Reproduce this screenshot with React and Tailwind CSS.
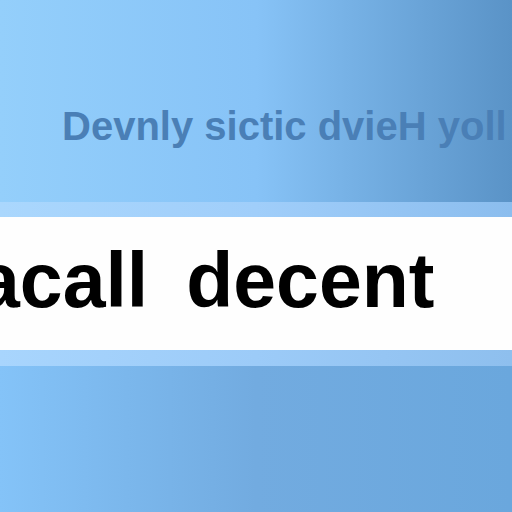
import React from 'react';

const font = { fontFamily: '"Liberation Sans", Arial, sans-serif' };

export default function App() {
  return (
    <div className="flex h-[512px] w-[512px] flex-col overflow-hidden" style={font}>
      <div className="h-[202px] bg-gradient-to-r from-[#94cffb] via-[#87c3f7] to-[#5a93c7] pl-[62px] pt-[106px]">
        <h1 className="whitespace-nowrap text-[40px] font-bold leading-none text-[#4a7fb6]">
          Devnly sictic dvieH yoll
        </h1>
      </div>

      <div className="h-[15px] bg-gradient-to-r from-[#aad7fd] via-[#a0cefa] to-[#8bbdee]" />

      <div className="h-[133px] bg-[#fefefe] pt-[25px]">
        <div className="ml-[-23px] flex gap-[38px] whitespace-nowrap text-[77px] font-bold leading-none text-black">
          <span>acall</span>
          <span>decent</span>
        </div>
      </div>

      <div className="h-[16px] bg-gradient-to-r from-[#a8d5fd] via-[#9ccbf8] to-[#8ebfee]" />

      <div className="flex-1 bg-gradient-to-r from-[#84c3f8] via-[#72abe0] to-[#6aa7dd]" />
    </div>
  );
}
